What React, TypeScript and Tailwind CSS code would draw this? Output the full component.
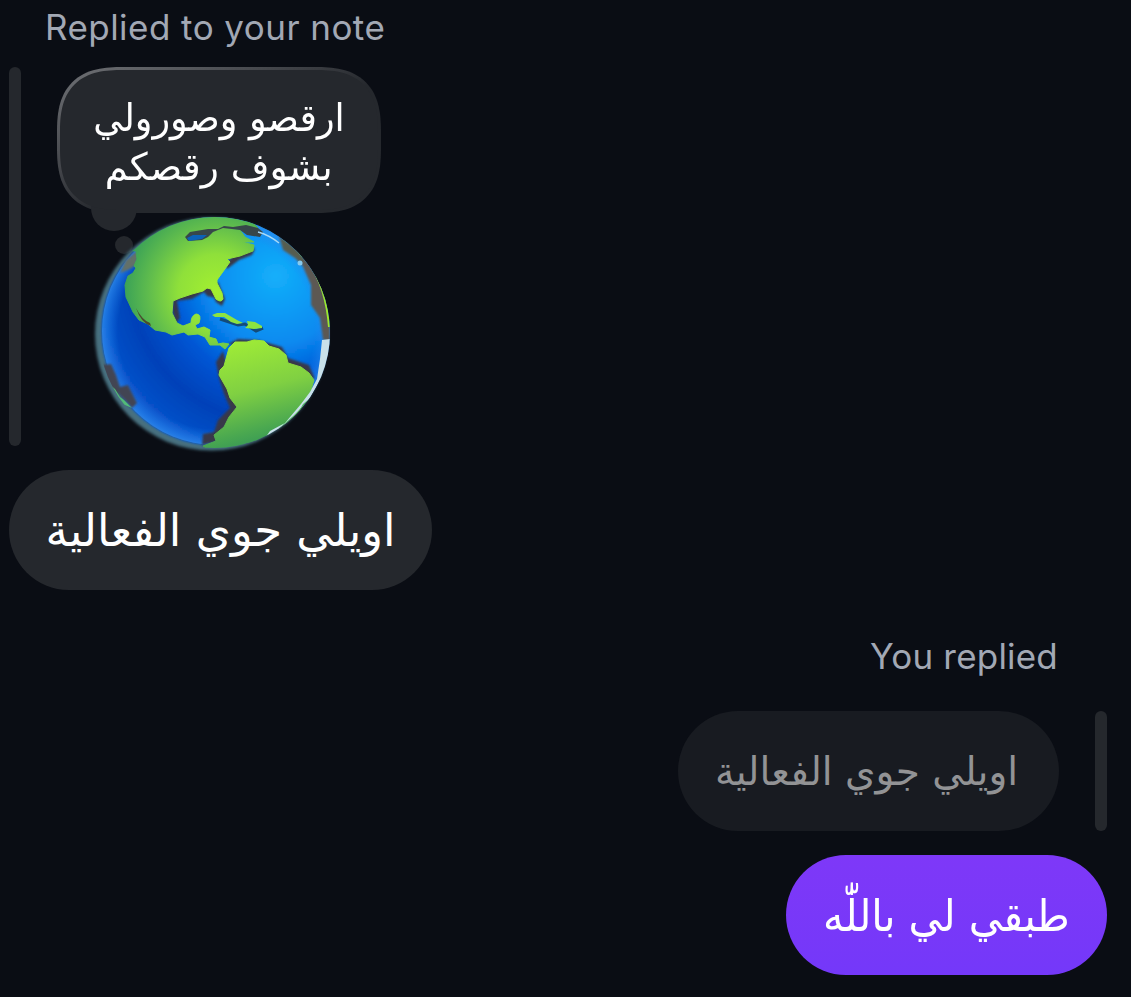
import type { ReactNode } from "react";

function Globe() {
  return (
    <svg
      viewBox="93 213 240 240"
      className="block h-[240px] w-[240px] overflow-visible"
      aria-hidden="true"
    >
      <defs>
        <radialGradient id="ocean" cx="0.76" cy="0.26" r="0.85">
          <stop offset="0" stopColor="#14affa" />
          <stop offset="0.35" stopColor="#078af0" />
          <stop offset="0.55" stopColor="#0655d4" />
          <stop offset="0.75" stopColor="#0441b8" />
          <stop offset="1" stopColor="#0858d0" />
        </radialGradient>
        <radialGradient id="north" gradientUnits="userSpaceOnUse" cx="216" cy="292" r="94">
          <stop offset="0" stopColor="#a4f030" />
          <stop offset="0.4" stopColor="#8fe03a" />
          <stop offset="0.7" stopColor="#62be4c" />
          <stop offset="1" stopColor="#379f58" />
        </radialGradient>
        <linearGradient id="south" x1="0.3" y1="0" x2="0.55" y2="1">
          <stop offset="0" stopColor="#a0ec36" />
          <stop offset="0.45" stopColor="#80d042" />
          <stop offset="0.8" stopColor="#4aa850" />
          <stop offset="1" stopColor="#2f9258" />
        </linearGradient>
        <radialGradient id="rim">
          <stop offset="0.86" stopColor="#1f84f0" stopOpacity="0" />
          <stop offset="1" stopColor="#2f8df0" stopOpacity="0.75" />
        </radialGradient>
        <clipPath id="disc">
          <circle cx="214.5" cy="332.5" r="115.5" />
        </clipPath>
        <filter id="soft" x="-10%" y="-10%" width="120%" height="120%">
          <feGaussianBlur stdDeviation="1.8" />
        </filter>
        <filter id="edge" x="-10%" y="-10%" width="120%" height="120%">
          <feGaussianBlur stdDeviation="0.8" />
        </filter>
      </defs>

      <circle cx="211.5" cy="334" r="116.5" fill="#46707f" filter="url(#soft)" />
      <g clipPath="url(#disc)">
        <circle cx="216" cy="331" r="114.5" fill="url(#ocean)" filter="url(#edge)" />
        <circle cx="216" cy="331" r="114" fill="url(#rim)" />

        {/* Edges of the land, seen as dark cliffs */}
        <g fill="#37394a" filter="url(#edge)">
          <path d="M120 273 L126 260 L137 251 L139 253 L136 265 L128 270Z" fill="#647067" />
          <path d="M176 323 Q171 312 173 301 L175 295 L194 292 L203 288 L212 286 L216 298 L207 296 L204 292 L192 299 L177 301 L180 318Z" />
          <path d="M210 287 L216 302 L222 306 L225 299 L218 282Z" />
          <path d="M225 265 L227 269 L239 260 L252 255 L255 249 L243 243Z" />
          <path d="M223 351 L216 362 L219 378 L224 394 L230 408 L218 420 L214 432 L203 434 L202 445 L216 442 L226 426 L238 407Z" />
          <path d="M228 344 L238 339 L258 340 L282 347 L288 358 L309 365 L315 379 L296 374 L285 366 L277 352Z" />
          <path
            d="M101 365 L111 364 L116 375 L120 387 L128 385 L137 403 L132 408 L119 394 L109 389 L104 380Z"
            fill="#434452"
          />
          <path d="M279 236 L294 246 L307 261 L304 267 L295 258 L283 250Z" fill="#575d50" />
          <path d="M300 260 L310 262 L321 281 L330 316 L330 341 L323 340 L320 318 L311 305 L311 285Z" fill="#5b5852" />
        </g>

        <path
          fill="url(#north)"
          stroke="url(#north)"
          strokeWidth="1"
          strokeLinejoin="round"
          d="M120 250 L136 251 L137 259 L134 266 L136 268 L133 273 L128 276 L125 285 L126 297 L133 312 L139 320 L148 324 L155 330 L166 332 L172 335 L184 332 L188 335 L198 334 L205 337 L210 345 L220 345 L225 349 L229 344 L223 343 L218 344 L216 339 L209 337 L210 330 L204 327 L197 329 L195 325 L199 323 Q202 314 196 314 Q191 316 191 323 L183 326 L177 323 L172 313 L173 301 L180 298 L192 294 L203 291 L207 288 L211 289 L216 299 Q221 303 223 299 L222 293 L217 283 L217 280 L222 273 L230 262 L227 259 L240 256 L253 251 L254 245 L242 242 L254 242 L245 237 L240 230 L232 229 L223 227 L258 228 L248 218 L215 213 L165 220Z"
        />
        <path
          fill="#37474a"
          d="M185 237 L190 232 L208 229 L218 229 L224 226 L233 227 L246 225 L258 228 L263 232 L260 237 L247 235 L240 230 L232 229 L223 228 L213 232 L208 237 L202 240 L188 241Z"
        />
        <path fill="#0b62b8" d="M187 238 L193 235 L207 235 L202 239 L189 241Z" />
        <path d="M258 232 Q269 235 279 243" fill="none" stroke="#a7d9f7" strokeWidth="1.4" />
        <path d="M136 308 Q142 320 150 323 L151 326 Q141 323 136 308Z" fill="#4c4b2e" />

        <path d="M220 319 L238 325 L245 324 L256 331 L263 328" fill="none" stroke="#144b79" strokeWidth="3" />
        <path fill="#8de341" d="M212 315 L217 313 L225 313 L237 320 L243 323 L237 324 L231 322 L224 317 L215 317Z" />
        <path fill="#8de341" d="M247 321 L255 322 L262 326 L262 328 L254 329 L245 328 L248 325Z" />

        <path
          fill="url(#south)"
          stroke="url(#south)"
          strokeWidth="1"
          strokeLinejoin="round"
          d="M229 348 L235 342 L247 342 L254 340 L264 341 L269 346 L279 349 L286 355 L288 363 L301 367 L309 373 L314 380 L311 390 L305 401 L299 412 L285 423 L273 430 L262 440 L246 443 L239 447 L213 452 L203 446 L216 441 L214 435 L224 427 L229 417 L237 407 L230 398 L227 389 L219 375 L220 370 L224 366Z"
        />
        <path
          fill="#c9e1ea"
          d="M322 340 L331 339 L328 366 L310 398 L288 422 L263 441 L270 431 L285 423 L301 404 L310 392 L317 379 L320 359Z"
        />
        <path fill="#56b765" d="M299 411 L303 404 L310 398 L286 426 L278 429Z" />
        <path
          fill="#53ba78"
          d="M101 370 L108 383 L115 389 L120 397 L124 400 L132 408 L118 402 L108 389Z"
        />
        <path
          d="M284 239 Q294 245 303 257 M309 263 Q326 288 329 327"
          fill="none"
          stroke="#9bea2c"
          strokeWidth="2"
        />
        <circle cx="300" cy="263" r="2.5" fill="#86caee" />
      </g>
    </svg>
  );
}

function Bubble({
  children,
  className,
}: {
  children: ReactNode;
  className: string;
}) {
  return (
    <div
      dir="rtl"
      className={`flex h-[120px] items-center justify-center rounded-full pt-[2px] whitespace-nowrap ${className}`}
    >
      {children}
    </div>
  );
}

export default function App() {
  return (
    <main className="flex h-[997px] w-[1131px] flex-col overflow-hidden bg-[#0a0d14] font-['Inter',sans-serif]">
      {/* Received note reply */}
      <section className="flex flex-col items-start pl-[9px]">
        <p className="h-[67px] pt-[5px] pl-[36px] text-[35px] leading-[44px] tracking-[0.45px] whitespace-nowrap text-[#a2a8b4]">
          Replied to your note
        </p>

        <div className="flex h-[379px]">
          <div className="w-3 rounded-full bg-[#25282d]" />
          <div className="ml-9 flex flex-col">
            <div className="relative h-[146px] w-[324px] shrink-0 rounded-[52px] bg-[linear-gradient(155deg,#707276_0%,#4a4c51_30%,#25282d_55%)] p-[3px] supports-[corner-shape:squircle]:rounded-[66px] supports-[corner-shape:squircle]:[corner-shape:superellipse(1.4)]">
              <div className="absolute top-[114px] left-[34px] h-[50px] w-[46px] rounded-full bg-[#25282d]" />
              <div className="absolute top-[169px] left-[58px] h-[18px] w-[18px] rounded-full bg-[#25282d]" />
              <div
                dir="rtl"
                className="relative flex h-full flex-col items-center justify-center rounded-[49px] bg-[#25282d] pt-[5px] font-['DejaVu_Sans',sans-serif] text-[38px] leading-[49px] whitespace-nowrap text-white supports-[corner-shape:squircle]:rounded-[63px] supports-[corner-shape:squircle]:[corner-shape:superellipse(1.4)]"
              >
                <span className="scale-x-[0.96]">ارقصو وصورولي</span>
                <span className="scale-x-[0.985]">بشوف رقصكم</span>
              </div>
            </div>
            <div className="relative ml-9">
              <Globe />
            </div>
          </div>
        </div>

        <Bubble className="mt-6 w-[423px] bg-[#25282d] font-['DejaVu_Sans',sans-serif] text-[45px] text-white">
          <span>اويلي جوي الفعالية</span>
        </Bubble>
      </section>

      {/* Sent reply */}
      <section className="mt-[45px] flex flex-col items-end pr-6">
        <p className="h-[76px] pr-[49px] text-[35px] leading-[42px] tracking-[0.2px] whitespace-nowrap text-[#a2a8b4]">
          You replied
        </p>

        <div className="flex gap-9">
          <Bubble className="w-[381px] bg-[#181b21] pr-1 font-['DejaVu_Sans',sans-serif] text-[39px] text-[#929395]">
            <span>اويلي جوي الفعالية</span>
          </Bubble>
          <div className="w-3 rounded-full bg-[#25282d]" />
        </div>

        <Bubble className="mt-6 w-[321px] bg-linear-to-b from-[#7e38f8] to-[#7438f9] font-['DejaVu_Sans',sans-serif] text-[44px] text-white">
          <span className="scale-x-[0.94]">طبقي لي باللّٰه</span>
        </Bubble>
      </section>
    </main>
  );
}
